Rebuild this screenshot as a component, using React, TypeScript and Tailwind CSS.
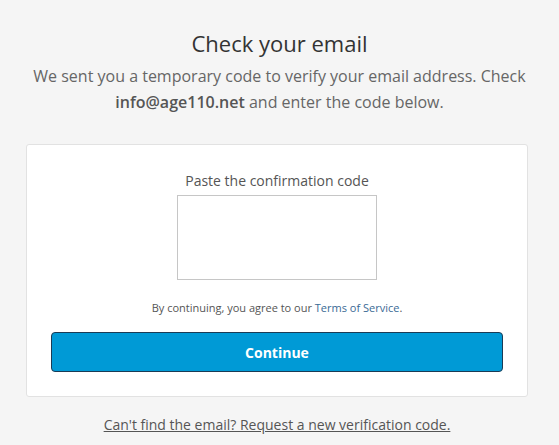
export default function App() {
  return (
    <div className="min-h-[445px] w-full bg-[#f5f5f5] font-['Open_Sans',sans-serif] flex flex-col items-center">
      <h1 className="mt-[29px] text-[22px] leading-[28px] text-[#333333] font-normal">Check your email</h1>
      <p className="mt-[6px] w-[520px] text-center text-[16px] leading-[26px] text-[#666666]">
        We sent you a temporary code to verify your email address. Check{" "}
        <span className="font-semibold text-[#555555]">info@age110.net</span> and enter the code below.
      </p>
      <div className="mt-[29px] w-[502px] h-[253px] bg-white border border-[#e2e2e2] rounded-[3px] flex flex-col items-center pt-[26px] ml-[-5px]">
        <label className="text-[14px] leading-[20px] text-[#555555]">Paste the confirmation code</label>
        <textarea className="mt-[4px] w-[200px] h-[85px] border border-[#c6c6c6] bg-white resize-none outline-none" />
        <p className="mt-[20px] text-[11px] leading-[16px] text-[#555555]">
          By continuing, you agree to our <span className="text-[#3a6a95]">Terms of Service</span>.
        </p>
        <button className="mt-[16px] w-[452px] h-[40px] rounded-[4px] bg-[#009ad6] border border-[#1b3b55] text-white text-[14px] font-bold">
          Continue
        </button>
      </div>
      <a className="mt-[18px] text-[14px] leading-[20px] text-[#555555] underline ml-[-5px]">
        Can't find the email? Request a new verification code.
      </a>
    </div>
  );
}
